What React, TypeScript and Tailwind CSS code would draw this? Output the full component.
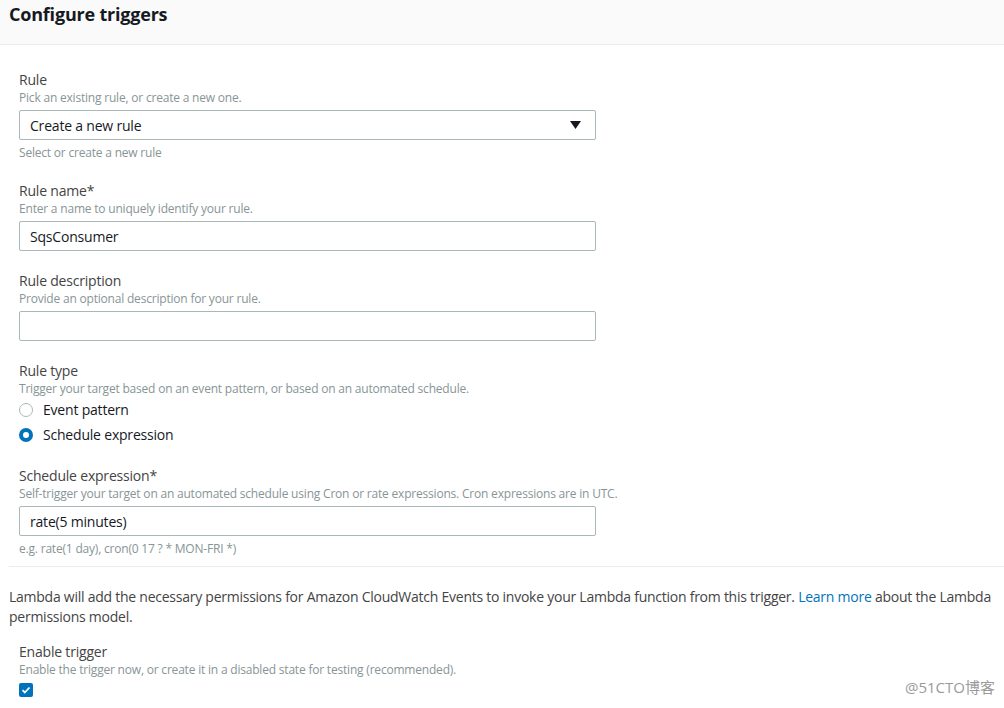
import React from 'react';

const font = { fontFamily: '"Open Sans", "Noto Sans CJK SC", sans-serif' };

const Field: React.FC<{ label: string; desc: string; children: React.ReactNode; hint?: string; last?: boolean }> = ({ label, desc, children, hint, last }) => (
  <div className={last ? 'mb-[9px]' : 'mb-[20px]'}>
    <div className="text-[14px] leading-[20px] text-[#444]">{label}</div>
    <div className="text-[12px] leading-[16px] text-[#879596]">{desc}</div>
    <div className="mt-[4px]">{children}</div>
    {hint && <div className="mt-[5px] text-[12px] leading-[16px] text-[#879596]">{hint}</div>}
  </div>
);

const TextBox: React.FC<{ value: string }> = ({ value }) => (
  <div className="w-[577px] h-[30px] border border-[#aab7b8] rounded-[2px] px-[10px] flex items-center text-[14px] text-[#16191f]">
    {value}
  </div>
);

export default function App() {
  return (
    <div className="w-[1004px] h-[708px] bg-white relative overflow-hidden tracking-[-0.2px]" style={font}>
      <div className="h-[45px] bg-[#fafafa] border-b border-[#eaeded] px-[9px] pt-[1px]">
        <h2 className="text-[18px] font-bold text-[#16191f] leading-[26px]">Configure triggers</h2>
      </div>

      <div className="px-[19px] pt-[25px]">
        <Field label="Rule" desc="Pick an existing rule, or create a new one." hint="Select or create a new rule">
          <div className="w-[577px] h-[30px] border border-[#aab7b8] rounded-[2px] pl-[10px] pr-[14px] flex items-center justify-between text-[14px] text-[#16191f]">
            <span>Create a new rule</span>
            <svg width="11" height="8" viewBox="0 0 11 8"><path d="M0 0h11L5.5 8z" fill="#16191f" /></svg>
          </div>
        </Field>

        <Field label="Rule name*" desc="Enter a name to uniquely identify your rule.">
          <TextBox value="SqsConsumer" />
        </Field>

        <Field label="Rule description" desc="Provide an optional description for your rule.">
          <TextBox value="" />
        </Field>

        <div className="mb-[19px]">
          <div className="text-[14px] leading-[20px] text-[#444]">Rule type</div>
          <div className="text-[12px] leading-[16px] text-[#879596]">Trigger your target based on an event pattern, or based on an automated schedule.</div>
          <div className="flex items-center h-[25px] text-[14px] text-[#16191f]">
            <span className="w-[14px] h-[14px] rounded-full border border-[#aab7b8] mr-[10px]" />
            Event pattern
          </div>
          <div className="flex items-center h-[25px] text-[14px] text-[#16191f]">
            <span className="w-[14px] h-[14px] rounded-full border-[4px] border-[#0073bb] bg-white mr-[10px]" />
            Schedule expression
          </div>
        </div>

        <Field
          label="Schedule expression*"
          desc="Self-trigger your target on an automated schedule using Cron or rate expressions. Cron expressions are in UTC."
          hint="e.g. rate(1 day), cron(0 17 ? * MON-FRI *)"
          last
        >
          <TextBox value="rate(5 minutes)" />
        </Field>
      </div>

      <div className="ml-[9px] border-t border-[#eaeded]" />

      <div className="pl-[9px] pt-[20px] text-[14px] leading-[20px] text-[#444] tracking-[-0.25px]">
        Lambda will add the necessary permissions for Amazon CloudWatch Events to invoke your Lambda function from this trigger.{' '}
        <span className="text-[#0073bb]">Learn more</span> about the Lambda permissions model.
      </div>

      <div className="px-[19px] pt-[15px]">
        <div className="text-[14px] leading-[20px] text-[#444]">Enable trigger</div>
        <div className="text-[12px] leading-[16px] text-[#879596]">Enable the trigger now, or create it in a disabled state for testing (recommended).</div>
        <div className="mt-[5px] w-[14px] h-[14px] rounded-[2px] bg-[#0073bb] flex items-center justify-center">
          <svg width="10" height="10" viewBox="0 0 10 10"><path d="M1.5 5.2l2.3 2.3 4.7-5" stroke="#fff" strokeWidth="1.8" fill="none" /></svg>
        </div>
      </div>

      <div className="absolute right-[9px] bottom-[10px] text-[15px] text-[#9a9a9a] tracking-normal">@51CTO博客</div>
    </div>
  );
}
